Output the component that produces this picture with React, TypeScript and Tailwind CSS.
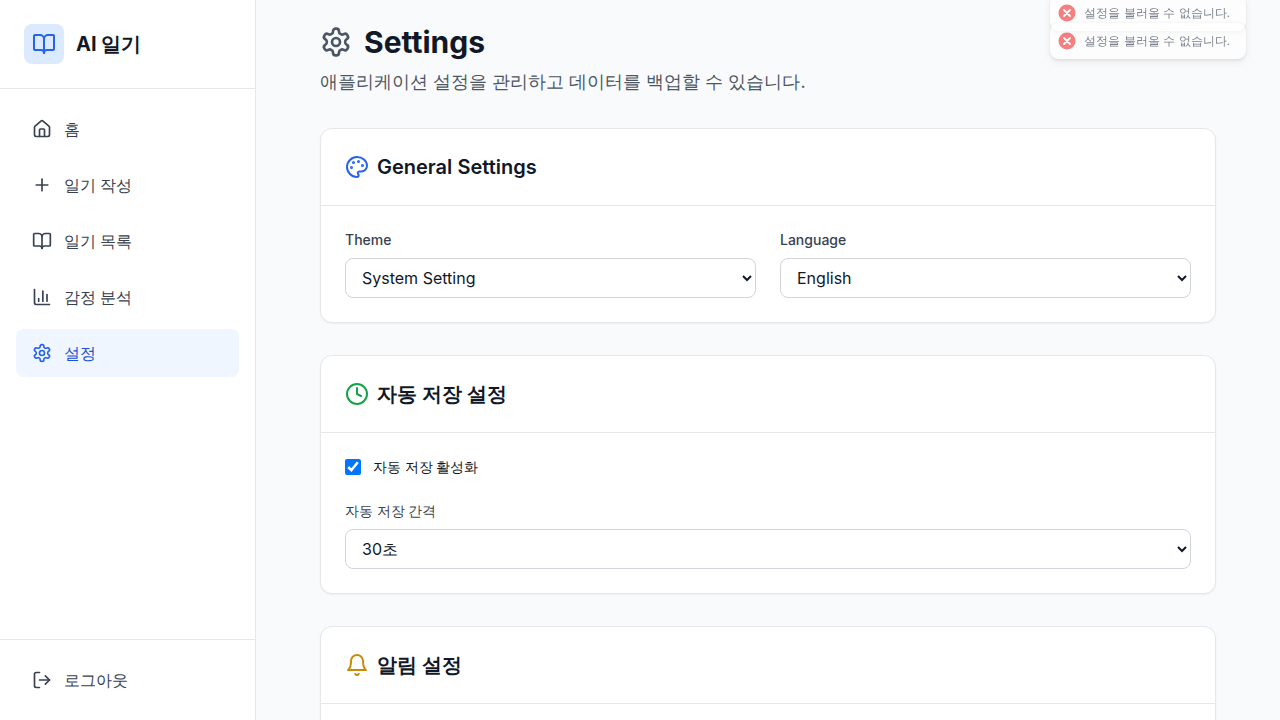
import type { ReactNode } from "react";
import { BookOpen, ChartColumn, Clock, House, LogOut, Plus } from "lucide-react";

type IconComponent = (props: { className?: string }) => ReactNode;

function StrokeIcon({ className, children }: { className?: string; children: ReactNode }) {
  return (
    <svg
      viewBox="0 0 24 24"
      fill="none"
      stroke="currentColor"
      strokeWidth="2"
      strokeLinecap="round"
      strokeLinejoin="round"
      aria-hidden="true"
      className={className}
    >
      {children}
    </svg>
  );
}

const SettingsIcon: IconComponent = ({ className }) => (
  <StrokeIcon className={className}>
    <path d="M12.22 2h-.44a2 2 0 0 0-2 2v.18a2 2 0 0 1-1 1.73l-.43.25a2 2 0 0 1-2 0l-.15-.08a2 2 0 0 0-2.73.73l-.22.38a2 2 0 0 0 .73 2.73l.15.1a2 2 0 0 1 1 1.72v.51a2 2 0 0 1-1 1.74l-.15.09a2 2 0 0 0-.73 2.73l.22.38a2 2 0 0 0 2.73.73l.15-.08a2 2 0 0 1 2 0l.43.25a2 2 0 0 1 1 1.73V20a2 2 0 0 0 2 2h.44a2 2 0 0 0 2-2v-.18a2 2 0 0 1 1-1.73l.43-.25a2 2 0 0 1 2 0l.15.08a2 2 0 0 0 2.73-.73l.22-.39a2 2 0 0 0-.73-2.73l-.15-.08a2 2 0 0 1-1-1.74v-.5a2 2 0 0 1 1-1.74l.15-.09a2 2 0 0 0 .73-2.73l-.22-.38a2 2 0 0 0-2.73-.73l-.15.08a2 2 0 0 1-2 0l-.43-.25a2 2 0 0 1-1-1.73V4a2 2 0 0 0-2-2z" />
    <circle cx="12" cy="12" r="3" />
  </StrokeIcon>
);

const PaletteIcon: IconComponent = ({ className }) => (
  <StrokeIcon className={className}>
    <circle cx="13.5" cy="6.5" r=".5" fill="currentColor" />
    <circle cx="17.5" cy="10.5" r=".5" fill="currentColor" />
    <circle cx="8.5" cy="7.5" r=".5" fill="currentColor" />
    <circle cx="6.5" cy="12.5" r=".5" fill="currentColor" />
    <path d="M12 2C6.5 2 2 6.5 2 12s4.5 10 10 10c.926 0 1.648-.746 1.648-1.688 0-.437-.18-.835-.437-1.125-.29-.289-.438-.652-.438-1.125a1.64 1.64 0 0 1 1.668-1.668h1.996c3.051 0 5.555-2.503 5.555-5.554C21.965 6.012 17.461 2 12 2z" />
  </StrokeIcon>
);

const BellIcon: IconComponent = ({ className }) => (
  <StrokeIcon className={className}>
    <path d="M6 8a6 6 0 0 1 12 0c0 7 3 9 3 9H3s3-2 3-9" />
    <path d="M10.3 21a1.94 1.94 0 0 0 3.4 0" />
  </StrokeIcon>
);

const ClockIcon: IconComponent = ({ className }) => <Clock className={className} />;
const HomeIcon: IconComponent = ({ className }) => <House className={className} />;
const PlusIcon: IconComponent = ({ className }) => <Plus className={className} />;
const BookIcon: IconComponent = ({ className }) => <BookOpen className={className} />;
const ChartIcon: IconComponent = ({ className }) => <ChartColumn className={className} />;

const navItems: { label: string; icon: IconComponent; active?: boolean }[] = [
  { label: "홈", icon: HomeIcon },
  { label: "일기 작성", icon: PlusIcon },
  { label: "일기 목록", icon: BookIcon },
  { label: "감정 분석", icon: ChartIcon },
  { label: "설정", icon: SettingsIcon, active: true },
];

function Sidebar() {
  return (
    <aside className="flex w-64 shrink-0 flex-col border-r border-[#e5e7eb] bg-white">
      <div className="flex items-center gap-3 border-b border-[#e5e7eb] p-6">
        <div className="flex size-10 items-center justify-center rounded-lg bg-[#dbeafe]">
          <BookOpen className="size-6 text-[#2563eb]" />
        </div>
        <span className="text-xl font-bold text-[#111827]">AI 일기</span>
      </div>
      <nav className="flex flex-1 flex-col gap-2 p-4">
        {navItems.map(({ label, icon: Icon, active }) => (
          <a
            key={label}
            href="#"
            aria-current={active ? "page" : undefined}
            className={
              active
                ? "flex items-center gap-3 rounded-lg bg-[#eff6ff] px-4 py-3 font-medium text-[#1d4ed8]"
                : "flex items-center gap-3 rounded-lg px-4 py-3 font-medium text-[#374151] hover:bg-gray-100"
            }
          >
            <Icon className={active ? "size-5 text-[#2563eb]" : "size-5"} />
            <span>{label}</span>
          </a>
        ))}
      </nav>
      <div className="border-t border-[#e5e7eb] p-4">
        <button
          type="button"
          className="flex w-full items-center gap-3 rounded-lg px-4 py-3 font-medium text-[#374151] hover:bg-gray-100"
        >
          <LogOut className="size-5" />
          <span>로그아웃</span>
        </button>
      </div>
    </aside>
  );
}

function Card({
  title,
  icon: Icon,
  iconClass,
  children,
}: {
  title: string;
  icon: IconComponent;
  iconClass: string;
  children?: ReactNode;
}) {
  return (
    <section className="rounded-xl border border-[#e5e7eb] bg-white shadow-[0_1px_2px_0_rgb(0_0_0/0.05)]">
      <div className="border-b border-[#e5e7eb] p-6">
        <h2 className="flex items-center gap-2 text-xl font-semibold text-[#111827]">
          <Icon className={iconClass} />
          {title}
        </h2>
      </div>
      <div className="p-6">{children}</div>
    </section>
  );
}

function SelectField({ id, label, options }: { id: string; label: string; options: string[] }) {
  return (
    <div>
      <label htmlFor={id} className="mb-2 block text-sm font-medium text-[#374151]">
        {label}
      </label>
      <select
        id={id}
        className="block h-10 w-full rounded-lg border border-[#d1d5db] bg-white px-3 text-base text-[#111827]"
      >
        {options.map((option) => (
          <option key={option}>{option}</option>
        ))}
      </select>
    </div>
  );
}

function CheckField({ id, label }: { id: string; label: string }) {
  return (
    <div className="flex items-center gap-3">
      <input id={id} type="checkbox" defaultChecked className="size-4" />
      <label htmlFor={id} className="text-sm font-medium text-[#111827]">
        {label}
      </label>
    </div>
  );
}

function Toast({ message }: { message: string }) {
  return (
    <div
      role="status"
      className="-mb-2 flex h-9 items-center gap-2 rounded-lg bg-white px-2 text-xs text-[#374151] opacity-65 shadow-[0_0_1px_rgb(0_0_0/0.2),0_3px_8px_rgb(0_0_0/0.1),0_2px_3px_rgb(0_0_0/0.08)]"
    >
      <svg viewBox="0 0 18 18" className="size-[18px]" aria-hidden="true">
        <circle cx="9" cy="9" r="8.5" fill="#f23f3f" />
        <path d="M6 6l6 6M12 6l-6 6" stroke="#fff" strokeWidth="1.8" strokeLinecap="round" />
      </svg>
      <span className="pr-2">{message}</span>
    </div>
  );
}

export default function App() {
  return (
    <div className="flex h-screen overflow-hidden bg-[#f9fafb] font-['Inter',sans-serif] text-[#111827]">
      <Sidebar />
      <main className="min-w-0 flex-1 overflow-y-auto px-8 py-6 [scrollbar-width:none]">
        <div className="mx-auto max-w-4xl">
          <header className="mb-8">
            <h1 className="flex items-center gap-3 text-3xl font-bold text-[#111827]">
              <SettingsIcon className="size-8 text-[#4b5563]" />
              Settings
            </h1>
            <p className="mt-2 text-lg text-[#4b5563]">
              애플리케이션 설정을 관리하고 데이터를 백업할 수 있습니다.
            </p>
          </header>
          <div className="flex flex-col gap-8">
            <Card title="General Settings" icon={PaletteIcon} iconClass="size-6 text-[#2563eb]">
              <div className="grid grid-cols-2 gap-6">
                <SelectField
                  id="theme"
                  label="Theme"
                  options={["System Setting", "Light", "Dark"]}
                />
                <SelectField id="language" label="Language" options={["English", "한국어"]} />
              </div>
            </Card>
            <Card title="자동 저장 설정" icon={ClockIcon} iconClass="size-6 text-[#16a34a]">
              <div className="flex flex-col gap-6">
                <CheckField id="autosave" label="자동 저장 활성화" />
                <SelectField
                  id="interval"
                  label="자동 저장 간격"
                  options={["30초", "1분", "5분"]}
                />
              </div>
            </Card>
            <Card title="알림 설정" icon={BellIcon} iconClass="size-6 text-[#ca8a04]" />
          </div>
        </div>
      </main>
      <div className="fixed -top-[5px] right-[34px] flex flex-col">
        <Toast message="설정을 불러올 수 없습니다." />
        <Toast message="설정을 불러올 수 없습니다." />
      </div>
    </div>
  );
}
